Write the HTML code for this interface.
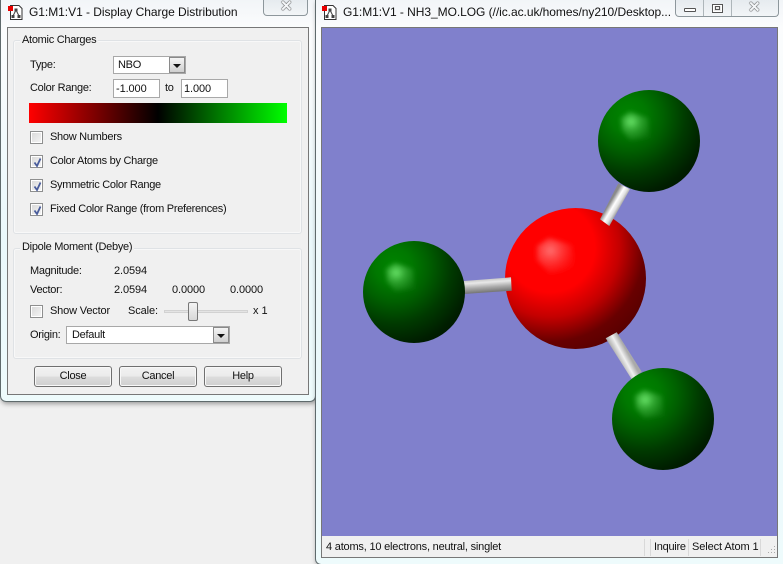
<!DOCTYPE html>
<html><head><meta charset="utf-8"><style>
html,body{margin:0;padding:0;background:#f0f0f0;width:783px;height:564px;overflow:hidden}
body{position:relative;font-family:"Liberation Sans",sans-serif;font-size:11px;color:#111;letter-spacing:-.28px}
div{box-sizing:border-box}
.a,.t{position:absolute}
.t{line-height:14px;height:14px;white-space:nowrap;margin-top:1px}
.n{letter-spacing:-.1px}
.win{position:absolute;background:linear-gradient(180deg,#f2f5f8 0,#fbfcfd 28px,#eaf8fb 60%,#eefbfc 100%);border:1px solid #5f6a6c;border-top:0;box-shadow:1px 2px 5px rgba(0,0,0,.35)}
.ttl{position:absolute;font-size:12px;line-height:16px;white-space:nowrap;color:#111}
.group{position:absolute;border:1px solid #dfe2e5;border-radius:3px;box-shadow:inset 0 0 0 1px #f8f8f8}
.lab{position:absolute;background:#f0f0f0;padding:0 2px;line-height:14px;height:14px;white-space:nowrap;margin-top:1px}
.inp{position:absolute;background:#fff;border:1px solid #a8a8a8;line-height:16px;white-space:nowrap}
.arr{position:absolute;background:linear-gradient(#f4f4f4,#cfcfcf);border:1px solid #8a8a8a}
.arr:after{content:"";position:absolute;left:3px;top:6px;border:4px solid transparent;border-top:4px solid #111;border-bottom:0}
.cb{position:absolute;width:13px;height:13px;border:1px solid #8e8f8f;background:linear-gradient(135deg,#d8d8d8,#f6f6f6);box-shadow:inset 0 0 0 1px #fff}
.cb svg{position:absolute;left:1px;top:1px}
.btn{position:absolute;width:78px;height:21px;border:1px solid #707070;border-radius:3px;background:linear-gradient(#f2f2f2 0,#ebebeb 48%,#dcdcdc 52%,#cfcfcf 100%);box-shadow:inset 0 0 0 1px #f8f8f8;text-align:center;line-height:18px;font-size:11px}
.cap{position:absolute;background:linear-gradient(#e6ebef,#f2f5f7);border:1px solid #8d979c;border-top:0;border-radius:0 0 4px 4px}
.x{position:absolute;font-size:15px;font-weight:bold;color:#f4f6f8;line-height:14px;letter-spacing:0;text-shadow:0 0 1px #444,0 0 1px #444,0 0 1px #444}
.sep{position:absolute;width:1px;background:#d9d9d9}
</style></head><body>

<!-- Dialog window -->
<div class="win" style="left:0;top:0;width:316px;height:402px;border-radius:0 0 6px 6px"></div>
<svg class="a" style="left:8px;top:5px" width="15" height="15" viewBox="0 0 15 15"><path d="M2.5.5H11L14 3.500V14.500H2.500Z" fill="#fff" stroke="#333"/><path d="M8 5L5 11M8 5l3 6" stroke="#444" fill="none"/><rect x="6.500" y="3.500" width="3" height="3" fill="#444"/><rect x="3.500" y="10" width="3" height="3" fill="#444"/><rect x="9.500" y="10" width="3" height="3" fill="#444"/><rect x="0" y="1" width="5" height="5" fill="#e80000"/></svg>
<div class="ttl" style="left:29px;top:4px;letter-spacing:-.04px">G1:M1:V1 - Display Charge Distribution</div>
<div class="cap" style="left:263px;top:0;width:45px;height:16px"></div>
<div class="x" style="left:280px;top:0">✕</div>

<div class="a" style="left:7px;top:27px;width:302px;height:368px;background:#f0f0f0;border:1px solid #777"></div>

<div class="group" style="left:13px;top:40px;width:289px;height:194px"></div>
<div class="lab" style="left:20px;top:32px">Atomic Charges</div>

<div class="t" style="left:30px;top:57px">Type:</div>
<div class="inp" style="left:113px;top:56px;width:73px;height:18px;padding-left:4px">NBO</div>
<div class="arr" style="left:169px;top:57px;width:16px;height:16px"></div>
<div class="t" style="left:30px;top:80px">Color Range:</div>
<div class="inp n" style="left:113px;top:79px;width:47px;height:19px;padding-left:2px;line-height:18px">-1.000</div>
<div class="t" style="left:165px;top:80px">to</div>
<div class="inp n" style="left:181px;top:79px;width:47px;height:19px;padding-left:2px;line-height:18px">1.000</div>
<div class="a" style="left:29px;top:103px;width:258px;height:20px;background:linear-gradient(90deg,#f00 0,#000 50%,#0f0 100%)"></div>

<div class="cb" style="left:30px;top:131px"></div>
<div class="t" style="left:50px;top:129px">Show Numbers</div>
<div class="cb" style="left:30px;top:155px"><svg width="11" height="11"><path d="M2.500 5.500L5 9 8.500 1.500" fill="none" stroke="#4a5d9c" stroke-width="1.800"/></svg></div>
<div class="t" style="left:50px;top:153px">Color Atoms by Charge</div>
<div class="cb" style="left:30px;top:179px"><svg width="11" height="11"><path d="M2.500 5.500L5 9 8.500 1.500" fill="none" stroke="#4a5d9c" stroke-width="1.800"/></svg></div>
<div class="t" style="left:50px;top:177px">Symmetric Color Range</div>
<div class="cb" style="left:30px;top:203px"><svg width="11" height="11"><path d="M2.500 5.500L5 9 8.500 1.500" fill="none" stroke="#4a5d9c" stroke-width="1.800"/></svg></div>
<div class="t" style="left:50px;top:201px">Fixed Color Range (from Preferences)</div>

<div class="group" style="left:13px;top:248px;width:289px;height:111px"></div>
<div class="lab" style="left:20px;top:239px">Dipole Moment (Debye)</div>

<div class="t" style="left:30px;top:263px">Magnitude:</div>
<div class="t n" style="left:114px;top:263px">2.0594</div>
<div class="t" style="left:30px;top:282px">Vector:</div>
<div class="t n" style="left:114px;top:282px">2.0594</div>
<div class="t n" style="left:172px;top:282px">0.0000</div>
<div class="t n" style="left:230px;top:282px">0.0000</div>
<div class="cb" style="left:30px;top:305px"></div>
<div class="t" style="left:50px;top:303px;letter-spacing:-.16px">Show Vector</div>
<div class="t" style="left:128px;top:303px;letter-spacing:-.1px">Scale:</div>
<div class="a" style="left:164px;top:310px;width:84px;height:3px;background:#e4e4e4;border:1px solid #d2d2d2"></div>
<div class="a" style="left:188px;top:302px;width:10px;height:19px;border:1px solid #777;border-radius:2px;background:linear-gradient(#f4f4f4,#d8d8d8)"></div>
<div class="t" style="left:253px;top:303px;letter-spacing:0">x 1</div>
<div class="t" style="left:30px;top:327px">Origin:</div>
<div class="inp" style="left:66px;top:326px;width:164px;height:18px;padding-left:5px">Default</div>
<div class="arr" style="left:213px;top:327px;width:16px;height:16px"></div>

<div class="btn" style="left:34px;top:366px">Close</div>
<div class="btn" style="left:119px;top:366px">Cancel</div>
<div class="btn" style="left:204px;top:366px">Help</div>

<!-- Main window -->
<div class="win" style="left:315px;top:0;width:470px;height:565px;border-radius:0 0 0 6px"></div>
<svg class="a" style="left:322px;top:5px" width="15" height="15" viewBox="0 0 15 15"><path d="M2.5.5H11L14 3.500V14.500H2.500Z" fill="#fff" stroke="#333"/><path d="M8 5L5 11M8 5l3 6" stroke="#444" fill="none"/><rect x="6.500" y="3.500" width="3" height="3" fill="#444"/><rect x="3.500" y="10" width="3" height="3" fill="#444"/><rect x="9.500" y="10" width="3" height="3" fill="#444"/><rect x="0" y="1" width="5" height="5" fill="#e80000"/></svg>
<div class="ttl" style="left:343px;top:4px;letter-spacing:-.05px">G1:M1:V1 - NH3_MO.LOG (//ic.ac.uk/homes/ny210/Desktop...</div>
<div class="cap" style="left:675px;top:0;width:104px;height:17px"></div>
<div class="a" style="left:703px;top:0;width:1px;height:16px;background:#aeb6ba"></div>
<div class="a" style="left:731px;top:0;width:1px;height:16px;background:#aeb6ba"></div>
<div class="a" style="left:684px;top:8px;width:12px;height:4px;border:1px solid #555;background:#fff;border-radius:1px"></div>
<div class="a" style="left:712px;top:4px;width:11px;height:9px;border:1px solid #555;background:#e8e8e8;box-shadow:inset 0 0 0 1px #fff"></div>
<div class="a" style="left:715px;top:6px;width:5px;height:4px;border:1px solid #555"></div>
<div class="x" style="left:748px;top:1px">✕</div>

<div class="a" style="left:321px;top:27px;width:457px;height:531px;background:#f0f0f0;border:1px solid #777"></div>
<svg class="a" style="left:322px;top:28px" width="455" height="508" viewBox="322 28 455 508">
<defs>
<filter id="bl" x="-30%" y="-30%" width="160%" height="160%"><feGaussianBlur stdDeviation="2.500"/></filter>
<radialGradient id="g" cx=".3" cy=".25" r=".9"><stop offset="0" stop-color="#008400"/><stop offset=".2" stop-color="#007800"/><stop offset=".38" stop-color="#006000"/><stop offset=".62" stop-color="#003a00"/><stop offset=".85" stop-color="#001e00"/><stop offset="1" stop-color="#001400"/></radialGradient>
<radialGradient id="r" cx=".32" cy=".28" r=".88"><stop offset="0" stop-color="#f00"/><stop offset=".36" stop-color="#f00"/><stop offset=".56" stop-color="#c40000"/><stop offset=".76" stop-color="#680000"/><stop offset="1" stop-color="#4c0000"/></radialGradient>
<radialGradient id="hg" cx=".35" cy=".35" r=".75"><stop offset="0" stop-color="#74f074" stop-opacity=".95"/><stop offset=".45" stop-color="#50c050" stop-opacity=".55"/><stop offset="1" stop-color="#40a040" stop-opacity=".12"/></radialGradient>
<radialGradient id="hr" cx=".35" cy=".35" r=".75"><stop offset="0" stop-color="#ff7878" stop-opacity=".95"/><stop offset=".5" stop-color="#ff5050" stop-opacity=".55"/><stop offset="1" stop-color="#ff2020" stop-opacity=".1"/></radialGradient>
<linearGradient id="b1" gradientUnits="userSpaceOnUse" x1="600" y1="219" x2="610" y2="225"><stop offset="0" stop-color="#8a8a8a"/><stop offset=".4" stop-color="#fff"/><stop offset=".7" stop-color="#e0e0e0"/><stop offset="1" stop-color="#999"/></linearGradient>
<linearGradient id="b2" gradientUnits="userSpaceOnUse" x1="487" y1="278" x2="488" y2="292"><stop offset="0" stop-color="#bdbdbd"/><stop offset=".3" stop-color="#e8e8e8"/><stop offset=".65" stop-color="#aaa"/><stop offset="1" stop-color="#777"/></linearGradient>
<linearGradient id="b3" gradientUnits="userSpaceOnUse" x1="606" y1="339" x2="617" y2="333"><stop offset="0" stop-color="#a8a8a8"/><stop offset=".55" stop-color="#f0f0f0"/><stop offset="1" stop-color="#aaa"/></linearGradient>
<polygon id="hgp" points="-28,-23 -19,-29 -1,-23 1,-3 -19,-1 -27,-11" fill="url(#hg)" filter="url(#bl)"/>
</defs>
<rect x="322" y="28" width="455" height="508" fill="#8080cc"/>
<circle cx="575.500" cy="278.500" r="70.500" fill="url(#r)"/>
<polygon points="537,246 549,238 572,245 575,268 550,274 537,260" fill="url(#hr)" filter="url(#bl)"/>
<polygon points="600,219.300 609.300,226 630,189.300 618.300,183.300" fill="url(#b1)"/>
<polygon points="464,281 511,277.300 511.700,290.700 464,294" fill="url(#b2)"/>
<polygon points="605.700,338.300 616.700,332.300 641.700,371.700 631.700,379.300" fill="url(#b3)"/>
<circle cx="649" cy="141" r="51" fill="url(#g)"/><use href="#hgp" x="649" y="141"/>
<circle cx="414" cy="292" r="51" fill="url(#g)"/><use href="#hgp" x="414" y="292"/>
<circle cx="663" cy="419" r="51" fill="url(#g)"/><use href="#hgp" x="663" y="419"/>
</svg>
<div class="t" style="left:326px;top:539px;letter-spacing:-.2px">4 atoms, 10 electrons, neutral, singlet</div>
<div class="sep" style="left:644px;top:539px;height:17px"></div>
<div class="sep" style="left:650px;top:539px;height:17px"></div>
<div class="t" style="left:654px;top:539px">Inquire</div>
<div class="sep" style="left:688px;top:539px;height:17px"></div>
<div class="t" style="left:692px;top:539px;letter-spacing:-.1px">Select Atom 1</div>
<div class="sep" style="left:760px;top:539px;height:17px"></div>
<svg class="a" style="left:765px;top:545px" width="11" height="11"><path d="M9 1h1v1H9zM9 4h1v1H9zM6 4h1v1H6zM9 7h1v1H9zM6 7h1v1H6zM3 7h1v1H3z" fill="#aaa"/></svg>
</body></html>
